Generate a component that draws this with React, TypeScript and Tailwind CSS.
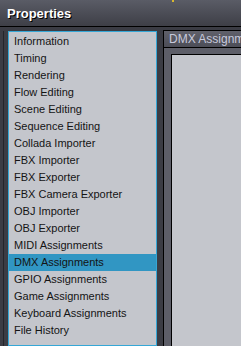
const items = [
  "Information",
  "Timing",
  "Rendering",
  "Flow Editing",
  "Scene Editing",
  "Sequence Editing",
  "Collada Importer",
  "FBX Importer",
  "FBX Exporter",
  "FBX Camera Exporter",
  "OBJ Importer",
  "OBJ Exporter",
  "MIDI Assignments",
  "DMX Assignments",
  "GPIO Assignments",
  "Game Assignments",
  "Keyboard Assignments",
  "File History",
]

export default function App() {
  const selected = "DMX Assignments"
  return (
    <div className="relative w-[241px] h-[346px] overflow-hidden bg-[#3b3c44] flex flex-col font-['Liberation_Sans',Arial,sans-serif]">
      {/* Title bar */}
      <div className="h-[27px] shrink-0 border-b border-black bg-gradient-to-b from-[#5a5c66] to-[#3e3f47] flex items-center pl-[7px]">
        <span className="text-[13px] font-bold text-white [text-shadow:1px_1px_0_#000] leading-none pt-[1px]">
          Properties
        </span>
      </div>
      <div className="absolute left-[172px] top-0 w-[2px] h-[2px] bg-[#d8b830]" />

      {/* Body */}
      <div className="flex flex-1 min-h-0 pt-[3px]">
        <div className="w-[3px] shrink-0" />
        <div className="w-[1px] shrink-0 bg-[#24252a] mt-[1px]" />
        <div className="w-[4px] shrink-0" />

        {/* List */}
        <div className="w-[149px] shrink-0 mt-[1px] pt-[1px] border border-[#35a7d6] bg-[#c4c6cc] flex flex-col">
          {items.map((item) => (
            <div
              key={item}
              className={`h-[17px] leading-[17px] pl-[5px] text-[11px] text-[#141414] whitespace-nowrap ${
                item === selected ? "bg-[#3196c3]" : ""
              }`}
            >
              {item}
            </div>
          ))}
        </div>

        <div className="w-[6px] shrink-0" />

        {/* Right panel */}
        <div className="flex-1 min-w-0 border-l border-t border-black flex flex-col bg-[#5d5e68]">
          <div className="h-[17px] shrink-0 border-b border-black bg-gradient-to-b from-[#60616b] to-[#4c4d57] pl-[5px] text-[12px] leading-[17px] text-[#c8cadc] whitespace-nowrap overflow-hidden">
            DMX Assignments
          </div>
          <div className="flex-1 pl-[7px] pt-[6px]">
            <div className="h-full border-l border-t border-black bg-[#c4c6cc]" />
          </div>
        </div>
      </div>
    </div>
  )
}
